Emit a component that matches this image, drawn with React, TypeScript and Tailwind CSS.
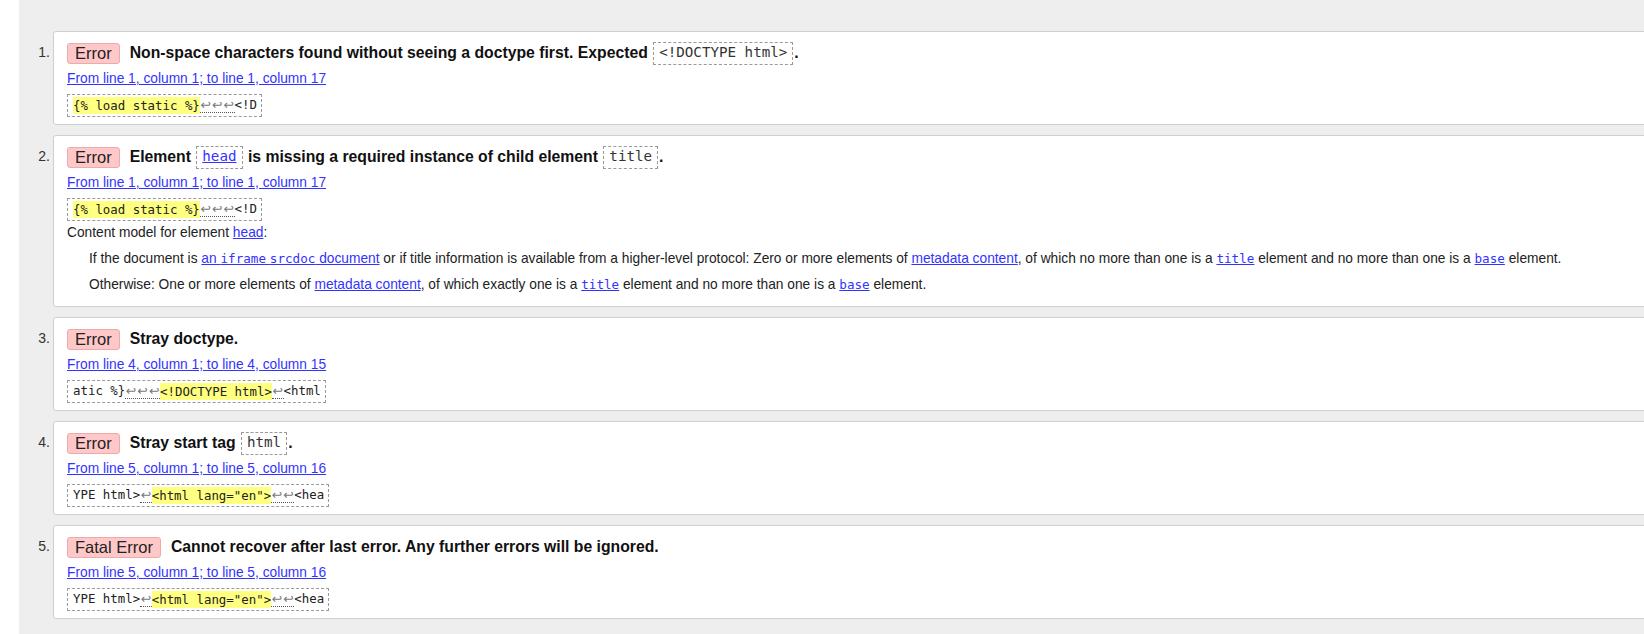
import React from 'react';

function Badge({ children }: { children: React.ReactNode }) {
  return (
    <span className="inline-flex items-center h-[21px] px-[7px] mr-[10px] rounded-[3px] border border-[#eeaaaa] bg-[#ffc8c8] text-[16.5px] font-normal text-[#222]">
      {children}
    </span>
  );
}

function Code({ children }: { children: React.ReactNode }) {
  return (
    <code className="inline-flex items-center h-[23px] px-[5px] mx-[1px] border border-dashed border-[#9a9a9a] font-['DejaVu_Sans_Mono',monospace] text-[14.2px] font-normal text-[#333]">
      {children}
    </code>
  );
}

function Hl({ children }: { children: React.ReactNode }) {
  return <span className="bg-[#ffff80] leading-[17px] inline-block">{children}</span>;
}

function Lf({ n }: { n: number }) {
  return (
    <span className="inline-flex border-b border-dotted border-[#555] leading-[14px] text-[#777]">
      {Array.from({ length: n }).map((_, i) => (
        <span key={i} className="inline-block w-[11.6px] text-center font-['DejaVu_Sans',sans-serif] text-[12.5px]">
          ↩
        </span>
      ))}
    </span>
  );
}

function Extract({ children }: { children: React.ReactNode }) {
  return (
    <div className="flex mt-[6px]">
      <code className="flex items-center h-[23px] pl-[5px] pr-[4px] border border-dashed border-[#9a9a9a] font-['DejaVu_Sans_Mono',monospace] text-[12.4px] text-[#222] whitespace-pre">
        {children}
      </code>
    </div>
  );
}

function Loc({ children }: { children: React.ReactNode }) {
  return (
    <p className="mt-[6px] leading-[18px] text-[13.75px]">
      <a className="text-[#3333ff] underline">{children}</a>
    </p>
  );
}

function Item({ n, children }: { n: number; children: React.ReactNode }) {
  return (
    <li className="flex">
      <div className="w-[34px] shrink-0 pr-[3px] pt-[12px] text-right text-[14px] leading-[18px] text-[#333]">{n}.</div>
      <div className="flex-1 -mr-[10px] bg-white border border-[#cfcfcf] rounded-[3px] pl-[13px] pt-[10px] pb-[7px]">
        {children}
      </div>
    </li>
  );
}

function Head({ badge, children }: { badge: string; children: React.ReactNode }) {
  return (
    <div className="flex items-center h-[22px]">
      <Badge>{badge}</Badge>
      <span className="text-[15.75px] font-bold text-[#111] whitespace-pre inline-flex items-center">{children}</span>
    </div>
  );
}

const mono = "font-['DejaVu_Sans_Mono',monospace] text-[12.6px]";

export default function App() {
  return (
    <div className="min-h-[634px] bg-white pl-[19px] overflow-hidden font-['Liberation_Sans',Arial,sans-serif] text-[#222]">
      <div className="min-h-[634px] bg-[#eeeeee] pt-[31px] pb-[16px]">
        <ol className="flex flex-col gap-[10px]">
          <Item n={1}>
            <Head badge="Error">
              Non-space characters found without seeing a doctype first. Expected <Code>&lt;!DOCTYPE html&gt;</Code>.
            </Head>
            <Loc>From line 1, column 1; to line 1, column 17</Loc>
            <Extract>
              <Hl>{'{% load static %}'}</Hl>
              <Lf n={3} />
              {'<!D'}
            </Extract>
          </Item>

          <Item n={2}>
            <Head badge="Error">
              Element <Code><a className="text-[#3333ff] underline">head</a></Code> is missing a required instance of child element <Code>title</Code>.
            </Head>
            <Loc>From line 1, column 1; to line 1, column 17</Loc>
            <Extract>
              <Hl>{'{% load static %}'}</Hl>
              <Lf n={3} />
              {'<!D'}
            </Extract>
            <p className="mt-[3px] leading-[18px] text-[13.75px]">
              Content model for element <a className="text-[#3333ff] underline">head</a>:
            </p>
            <p className="mt-[8px] ml-[22px] leading-[18px] text-[13.75px] whitespace-nowrap">
              If the document is{' '}
              <a className="text-[#3333ff] underline">
                an <span className={mono}>iframe</span> <span className={mono}>srcdoc</span> document
              </a>{' '}
              or if title information is available from a higher-level protocol: Zero or more elements of{' '}
              <a className="text-[#3333ff] underline">metadata content</a>, of which no more than one is a{' '}
              <a className={`text-[#3333ff] underline ${mono}`}>title</a> element and no more than one is a{' '}
              <a className={`text-[#3333ff] underline ${mono}`}>base</a> element.
            </p>
            <p className="mt-[8px] mb-[5px] ml-[22px] leading-[18px] text-[13.75px] whitespace-nowrap">
              Otherwise: One or more elements of <a className="text-[#3333ff] underline">metadata content</a>, of which exactly one is a{' '}
              <a className={`text-[#3333ff] underline ${mono}`}>title</a> element and no more than one is a{' '}
              <a className={`text-[#3333ff] underline ${mono}`}>base</a> element.
            </p>
          </Item>

          <Item n={3}>
            <Head badge="Error">Stray doctype.</Head>
            <Loc>From line 4, column 1; to line 4, column 15</Loc>
            <Extract>
              {'atic %}'}
              <Lf n={3} />
              <Hl>{'<!DOCTYPE html>'}</Hl>
              <Lf n={1} />
              {'<html'}
            </Extract>
          </Item>

          <Item n={4}>
            <Head badge="Error">
              Stray start tag <Code>html</Code>.
            </Head>
            <Loc>From line 5, column 1; to line 5, column 16</Loc>
            <Extract>
              {'YPE html>'}
              <Lf n={1} />
              <Hl>{'<html lang="en">'}</Hl>
              <Lf n={2} />
              {'<hea'}
            </Extract>
          </Item>

          <Item n={5}>
            <Head badge="Fatal Error">Cannot recover after last error. Any further errors will be ignored.</Head>
            <Loc>From line 5, column 1; to line 5, column 16</Loc>
            <Extract>
              {'YPE html>'}
              <Lf n={1} />
              <Hl>{'<html lang="en">'}</Hl>
              <Lf n={2} />
              {'<hea'}
            </Extract>
          </Item>
        </ol>
      </div>
    </div>
  );
}
